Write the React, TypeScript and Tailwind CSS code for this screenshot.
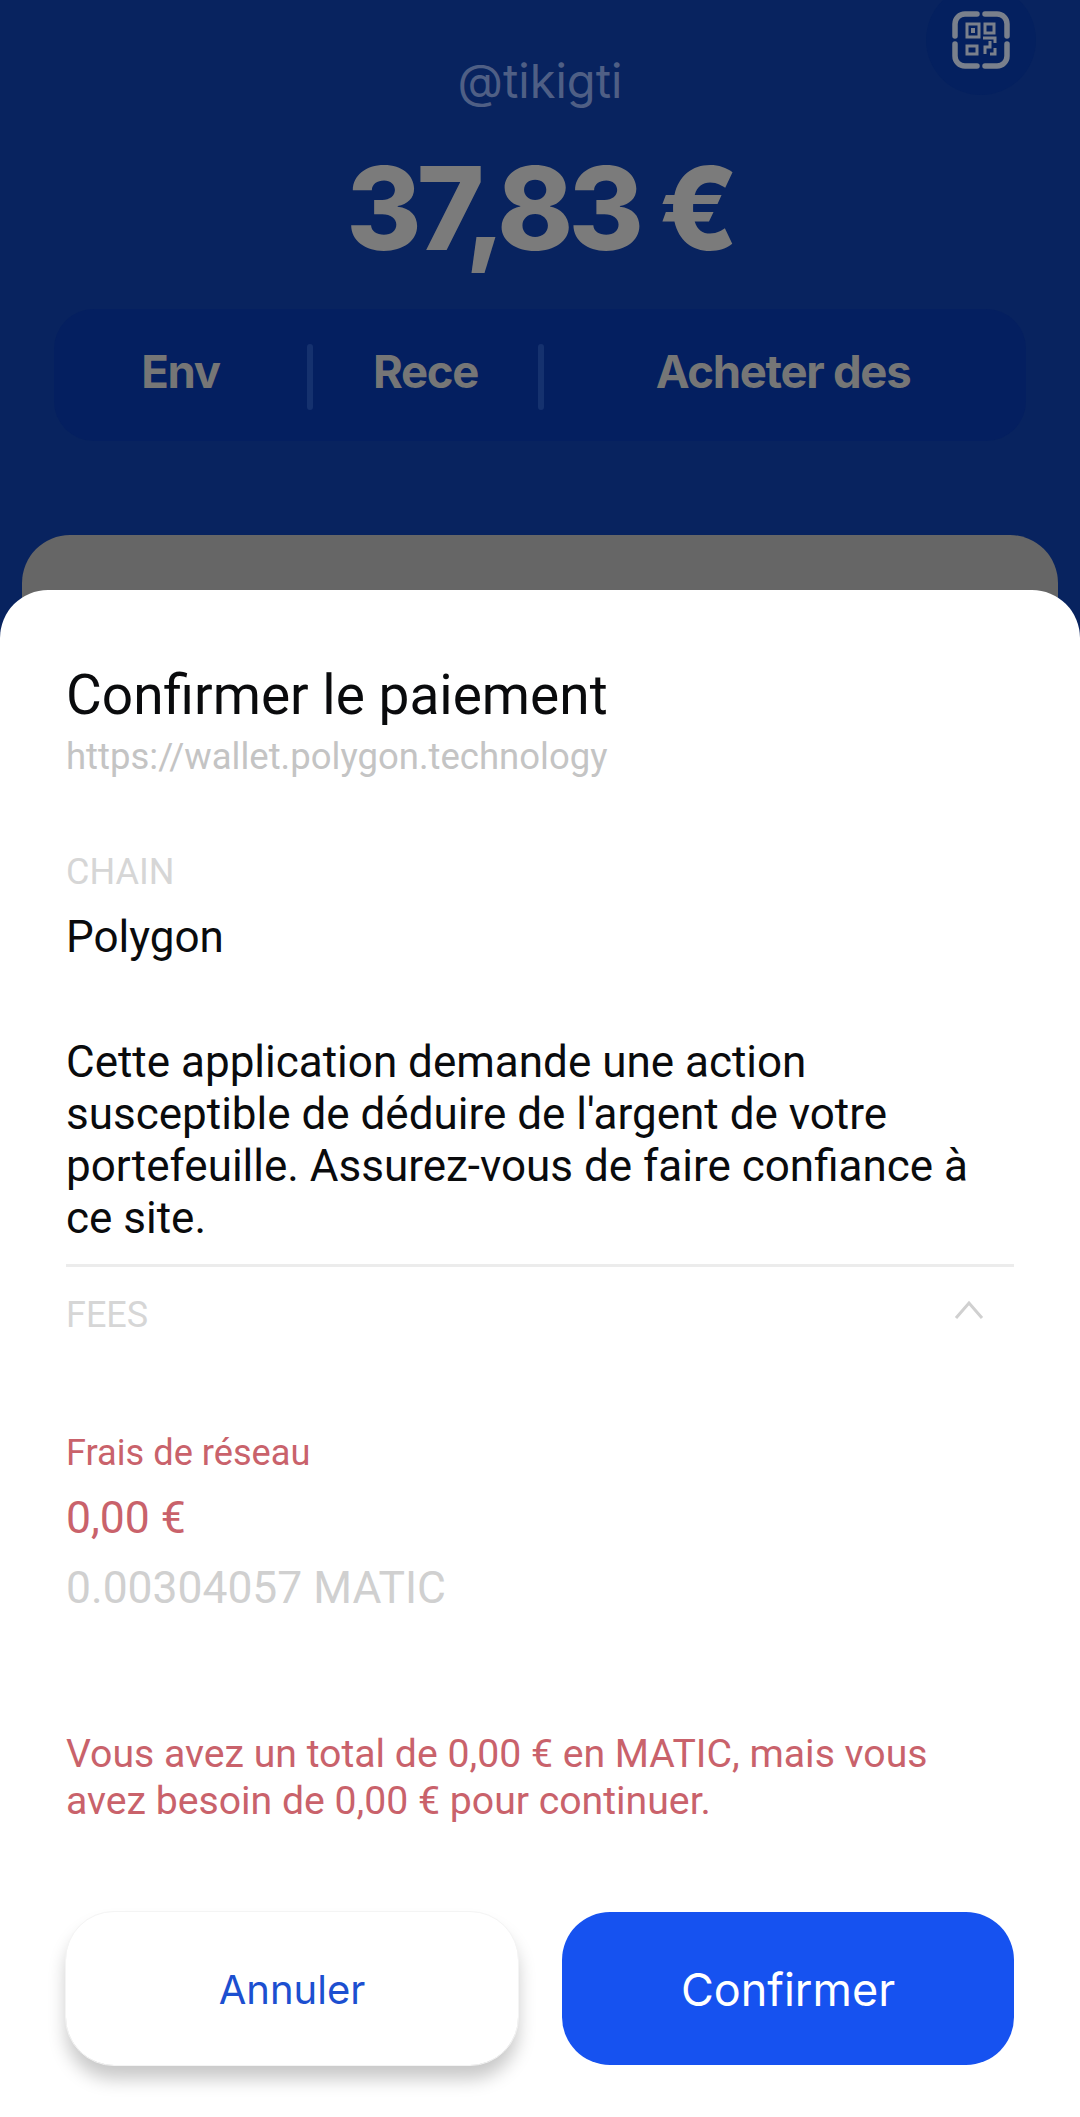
const QrIcon = () => (
  <svg width="58" height="58" viewBox="0 0 58 58" fill="none" stroke="#7a808c">
    <g strokeWidth="5.5" strokeLinecap="round">
      <path d="M25 3H13A10 10 0 0 0 3 13V25" />
      <path d="M33 3H45A10 10 0 0 1 55 13V25" />
      <path d="M3 33V45A10 10 0 0 0 13 55H25" />
      <path d="M55 33V45A10 10 0 0 1 45 55H33" />
    </g>
    <g strokeWidth="3">
      <rect x="15" y="13" width="12" height="13" />
      <rect x="33" y="13" width="9" height="9" />
      <rect x="15" y="35" width="10" height="8" />
      <path d="M31 27H43V32M33 43V36H38V30M38 43H43V37" />
    </g>
    <rect x="19" y="17" width="4" height="5" fill="#7a808c" stroke="none" />
  </svg>
);

const Divider = () => <div className="mt-[4px] h-[66px] w-[6px] rounded-full bg-[#15316e]" />;

export default function App() {
  return (
    <div className="relative h-[2117px] w-[1080px] overflow-hidden bg-[#08235f] font-['Roboto',sans-serif]">
      <div className="flex justify-end pr-[44px]">
        <div className="-mt-[15px] flex h-[110px] w-[110px] items-center justify-center rounded-full bg-[#04205f]">
          <QrIcon />
        </div>
      </div>

      <div className="-mt-[44px] text-center font-['Inter',sans-serif] text-[47px] leading-[60px] text-[#4f5f85]">
        @tikigti
      </div>

      <div className="mt-[33px] text-center font-['Inter',sans-serif] text-[115px] leading-[130px] font-extrabold tracking-[-5px] text-[#7b7b7b]">
        37,83 €
      </div>

      <div className="mx-[54px] mt-[35px] flex h-[132px] items-center rounded-[40px] bg-[#041f60] font-['Inter',sans-serif] text-[45.5px] font-bold tracking-[-1.3px] text-[#767676]">
        <div className="mb-[6px] w-[253px] text-center">Env</div>
        <Divider />
        <div className="mb-[6px] w-[225px] text-center">Rece</div>
        <Divider />
        <div className="mb-[6px] flex-1 pr-[4px] text-center">Acheter des</div>
      </div>

      <div className="mx-[22px] mt-[94px] h-[200px] rounded-t-[48px] bg-[#666666]" />

      <div className="absolute inset-x-0 top-[590px] bottom-0 rounded-t-[48px] bg-white px-[66px]">
        <h1 className="mt-[73px] text-[55px] leading-[64px] text-[#0a0b0d]">Confirmer le paiement</h1>
        <p className="mt-[10px] text-[36.5px] leading-[40px] text-[#c4c4c4]">https://wallet.polygon.technology</p>

        <p className="mt-[75px] text-[36px] leading-[40px] text-[#d6d6d6]">CHAIN</p>
        <p className="mt-[17px] text-[44px] leading-[56px] text-[#0a0b0d]">Polygon</p>

        <p className="mt-[71px] text-[44px] leading-[52px] text-[#0a0b0d]">
          Cette application demande une action susceptible de déduire de l'argent de votre portefeuille. Assurez-vous de
          faire confiance à ce site.
        </p>

        <div className="mt-[20px] h-[3px] bg-[#ececec]" />

        <div className="mt-[28px] flex items-start justify-between">
          <span className="text-[36px] leading-[40px] text-[#d6d6d6]">FEES</span>
          <svg className="mr-[30px] mt-[5px]" width="30" height="20" viewBox="0 0 30 20" fill="none" stroke="#d0d0d0" strokeWidth="3">
            <path d="M2 18L15 3L28 18" />
          </svg>
        </div>

        <p className="mt-[98px] text-[36.2px] leading-[40px] text-[#c9626b]">Frais de réseau</p>
        <p className="mt-[17px] text-[44.5px] leading-[56px] text-[#c9626b]">0,00 €</p>
        <p className="mt-[14px] text-[44.4px] leading-[56px] text-[#d0d0d0]">0.00304057 MATIC</p>

        <p className="mt-[115px] text-[39.2px] leading-[47px] text-[#c9626b]">
          Vous avez un total de 0,00 € en MATIC, mais vous avez besoin de 0,00 € pour continuer.
        </p>

        <div className="mt-[87px] flex gap-[44px] font-['Inter',sans-serif]">
          <button className="h-[153px] flex-1 rounded-[48px] bg-white pt-[3px] text-[40px] text-[#1c4fd0] shadow-[0_14px_18px_rgba(0,0,0,0.22)] outline outline-[#f4f4f4]">
            Annuler
          </button>
          <button className="h-[153px] flex-1 rounded-[48px] bg-[#1652f0] pt-[3px] text-[45px] text-white">Confirmer</button>
        </div>
      </div>
    </div>
  );
}
